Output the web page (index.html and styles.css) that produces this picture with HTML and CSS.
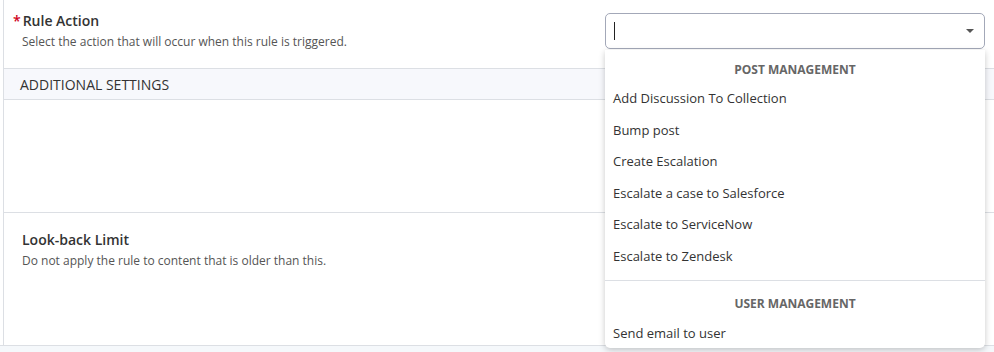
FILE: index.html
```html
<!DOCTYPE html>
<html lang="en">
<head>
    <meta charset="UTF-8">
    <title>Rule Settings</title>
    <link rel="stylesheet" href="styles.css">
</head>
<body>
    <div class="panel">
        <div class="field-row">
            <div class="field-info">
                <div class="field-label"><span class="required">*</span>Rule Action</div>
                <div class="field-help">Select the action that will occur when this rule is triggered.</div>
            </div>
            <div class="select-wrap">
                <div class="select-box">
                    <span class="caret"></span>
                    <svg class="arrow" width="10" height="6" viewBox="0 0 10 6"><path d="M1 1h8L5 5z" fill="#555"/></svg>
                </div>
                <div class="dropdown">
                    <div class="group-title">POST MANAGEMENT</div>
                    <div class="option">Add Discussion To Collection</div>
                    <div class="option">Bump post</div>
                    <div class="option">Create Escalation</div>
                    <div class="option">Escalate a case to Salesforce</div>
                    <div class="option">Escalate to ServiceNow</div>
                    <div class="option">Escalate to Zendesk</div>
                    <div class="group-title divided">USER MANAGEMENT</div>
                    <div class="option">Send email to user</div>
                </div>
            </div>
        </div>
        <div class="section-header">ADDITIONAL SETTINGS</div>
        <div class="section-empty"></div>
        <div class="field-row lookback">
            <div class="field-info">
                <div class="field-label">Look-back Limit</div>
                <div class="field-help">Do not apply the rule to content that is older than this.</div>
            </div>
        </div>
    </div>
    <div class="footer"></div>
</body>
</html>
```

FILE: styles.css
```css
body {
    margin: 0;
    font-family: "Open Sans", "Liberation Sans", sans-serif;
    color: #333;
    background: #fff;
    height: 352px;
    overflow: hidden;
}
.panel {
    margin-left: 3px;
    border-left: 1px solid #dcdfe4;
}
.field-row {
    display: flex;
    justify-content: space-between;
    height: 68px;
    padding: 0 9px 0 18px;
}
.field-info {
    padding-top: 11px;
}
.field-label {
    font-size: 14px;
    font-weight: 600;
    color: #333;
    line-height: 19px;
}
.required {
    color: #d0021b;
    margin-right: 2px;
    margin-left: -9px;
}
.field-help {
    font-size: 12px;
    color: #555;
    line-height: 16px;
    margin-top: 4px;
}
.select-wrap {
    position: relative;
    width: 380px;
    padding-top: 13px;
}
.select-box {
    height: 34px;
    border: 1px solid #a3a8b8;
    border-radius: 5px;
    display: flex;
    align-items: center;
    justify-content: space-between;
    padding: 0 9px 0 8px;
}
.caret {
    width: 1px;
    height: 18px;
    background: #222;
}
.dropdown {
    position: absolute;
    top: 50px;
    left: 0;
    right: 0;
    background: #fff;
    border-radius: 0 0 5px 5px;
    box-shadow: 0 2px 6px rgba(0, 0, 0, 0.22);
    z-index: 5;
    padding-bottom: 9px;
}
.group-title {
    text-align: center;
    font-size: 12px;
    font-weight: 700;
    color: #666;
    height: 29px;
    line-height: 39px;
}
.group-title.divided {
    border-top: 1px solid #dcdfe4;
    margin-top: 11px;
    height: 38px;
    line-height: 46px;
}
.option {
    font-size: 13px;
    color: #333;
    padding: 0 8px;
    height: 31.6px;
    line-height: 39px;
}
.group-title.divided + .option {
    height: 20px;
    line-height: 28px;
}
.section-header {
    border-top: 1px solid #dcdfe4;
    border-bottom: 1px solid #dcdfe4;
    background: #f7f8fc;
    height: 30px;
    line-height: 31px;
    font-size: 14px;
    padding-left: 16px;
}
.section-empty {
    height: 112px;
    border-bottom: 1px solid #dcdfe4;
}
.lookback {
    height: 132px;
}
.lookback .field-info {
    padding-top: 17px;
}
.footer {
    border-top: 1px solid #dcdfe4;
    background: #f5f8fb;
    height: 10px;
}
```
